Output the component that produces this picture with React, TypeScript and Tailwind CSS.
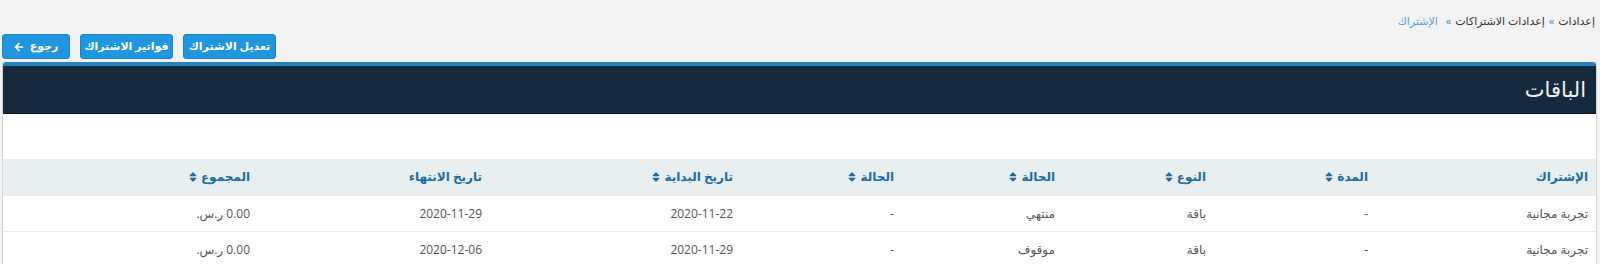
import React from "react";
import { FaArrowLeft } from "react-icons/fa";

const SortIcon = () => (
  <svg width="8" height="12" viewBox="0 0 320 512" className="inline-block fill-current">
    <path d="M41 288h238c21.4 0 32.1 25.9 17 41L177 448c-9.4 9.4-24.6 9.4-33.9 0L24 329c-15.1-15.1-4.4-41 17-41zm255-105L177 64c-9.4-9.4-24.6-9.4-33.9 0L24 183c-15.1 15.1-4.4 41 17 41h238c21.4 0 32.1-25.9 17-41z" />
  </svg>
);

const cols = "grid-cols-[220px_162px_151px_161px_161px_251px_232px_1fr]";

const headers: { t: string; sort: boolean }[] = [
  { t: "الإشتراك", sort: false },
  { t: "المدة", sort: true },
  { t: "النوع", sort: true },
  { t: "الحالة", sort: true },
  { t: "الحالة", sort: true },
  { t: "تاريخ البداية", sort: true },
  { t: "تاريخ الانتهاء", sort: false },
  { t: "المجموع", sort: true },
];

const rows = [
  ["تجربة مجانية", "-", "باقة", "منتهي", "-", "2020-11-22", "2020-11-29", "0.00 ر.س."],
  ["تجربة مجانية", "-", "باقة", "موقوف", "-", "2020-11-29", "2020-12-06", "0.00 ر.س."],
];

export default function App() {
  return (
    <div
      dir="rtl"
      className="w-[1600px] h-[264px] overflow-hidden bg-[#f3f3f3] text-[#555]"
      style={{ fontFamily: '"Open Sans", "DejaVu Sans", sans-serif' }}
    >
      <div className="h-[34px] pr-[5px] pt-[12px] text-[11px] leading-[18px] flex items-start gap-[4px]">
        <span className="text-[#333]">إعدادات</span>
        <span className="text-[#2b8fd6]">»</span>
        <span className="text-[#333]">إعدادات الاشتراكات</span>
        <span className="text-[#2b8fd6]">»</span>
        <span className="text-[#4aa3df] mr-[4px]">الإشتراك</span>
      </div>
      <div dir="ltr" className="flex gap-[10px] pl-[2px] h-[25px]">
        <button className="w-[68px] h-[25px] rounded-[3px] bg-[#1f96de] border border-[#1a86c9] text-white text-[11px] font-bold flex items-center justify-center gap-[6px]">
          <FaArrowLeft className="w-[10px] h-[10px]" />
          <span>رجوع</span>
        </button>
        <button className="w-[93px] h-[25px] rounded-[3px] bg-[#1f96de] border border-[#1a86c9] text-white text-[11px] font-bold">
          فواتير الاشتراك
        </button>
        <button className="w-[93px] h-[25px] rounded-[3px] bg-[#1f96de] border border-[#1a86c9] text-white text-[11px] font-bold">
          تعديل الاشتراك
        </button>
      </div>
      <div className="mt-[3px] ml-[2px] mr-[3px] bg-white border-x border-[#d5d5d5]">
        <div className="border-t-[4px] border-[#2a80b9] rounded-t-[3px] bg-[#162a3e] h-[52px] border-b border-b-[#0b1520] flex items-center pr-[10px]">
          <h2 className="text-[#eef2f5] text-[21px] font-normal leading-none">الباقات</h2>
        </div>
        <div className="h-[45px]" />
        <div className={`grid ${cols} bg-[#e8eff1] h-[36px] items-center text-[12px] font-bold text-[#1a6ca3]`}>
          {headers.map((h, i) => (
            <div key={i} className="pr-[8px] flex items-center gap-[4px]">
              <span>{h.t}</span>
              {h.sort && <SortIcon />}
            </div>
          ))}
        </div>
        {rows.map((r, ri) => (
          <div key={ri} className={`grid ${cols} h-[36px] items-center text-[12px] text-[#555] border-t border-[#ececec]`}>
            {r.map((c, ci) => (
              <div key={ci} className="pr-[8px]">
                {c}
              </div>
            ))}
          </div>
        ))}
      </div>
    </div>
  );
}
